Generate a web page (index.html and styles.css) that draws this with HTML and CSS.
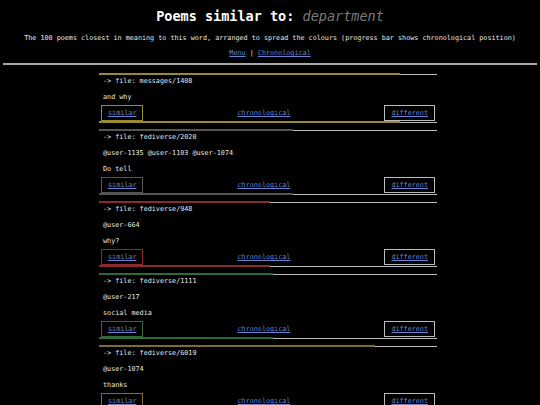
FILE: index.html
```html
<!DOCTYPE html>
<html>
<head>
<meta charset="utf-8">
<link rel="stylesheet" href="styles.css">
</head>
<body>
<header class="head">
  <h1 class="title">Poems similar to: <em class="word">department</em></h1>
  <p class="sub">The 100 poems closest in meaning to this word, arranged to spread the colours (progress bar shows chronological position)</p>
  <p class="menu"><a href="#">Menu</a> | <a href="#">Chronological</a></p>
</header>
<hr class="rule">
<main class="list">
  <section class="poem c-gold">
    <div class="bar"><div class="fill" style="width:89%"></div><div class="rest"></div></div>
    <p class="line">-&gt; file: messages/1408</p>
    <p class="line">and why</p>
    <nav class="nav"><a class="box sim" href="#">similar</a><a href="#">chronological</a><a class="box diff" href="#">different</a></nav>
    <div class="bar"><div class="fill" style="width:89%"></div><div class="rest"></div></div>
  </section>
  <section class="poem c-gray">
    <div class="bar"><div class="fill" style="width:57.4%"></div><div class="rest"></div></div>
    <p class="line">-&gt; file: fediverse/2020</p>
    <p class="line">@user-1135 @user-1103 @user-1074</p>
    <p class="line">Do tell</p>
    <nav class="nav"><a class="box sim" href="#">similar</a><a href="#">chronological</a><a class="box diff" href="#">different</a></nav>
    <div class="bar"><div class="fill" style="width:57.4%"></div><div class="rest"></div></div>
  </section>
  <section class="poem c-red">
    <div class="bar"><div class="fill" style="width:50.6%"></div><div class="rest"></div></div>
    <p class="line">-&gt; file: fediverse/948</p>
    <p class="line">@user-664</p>
    <p class="line">why?</p>
    <nav class="nav"><a class="box sim" href="#">similar</a><a href="#">chronological</a><a class="box diff" href="#">different</a></nav>
    <div class="bar"><div class="fill" style="width:50.6%"></div><div class="rest"></div></div>
  </section>
  <section class="poem c-green">
    <div class="bar"><div class="fill" style="width:51.5%"></div><div class="rest"></div></div>
    <p class="line">-&gt; file: fediverse/1111</p>
    <p class="line">@user-217</p>
    <p class="line">social media</p>
    <nav class="nav"><a class="box sim" href="#">similar</a><a href="#">chronological</a><a class="box diff" href="#">different</a></nav>
    <div class="bar"><div class="fill" style="width:51.5%"></div><div class="rest"></div></div>
  </section>
  <section class="poem c-olive">
    <div class="bar"><div class="fill" style="width:81.7%"></div><div class="rest"></div></div>
    <p class="line">-&gt; file: fediverse/6019</p>
    <p class="line">@user-1074</p>
    <p class="line">thanks</p>
    <nav class="nav"><a class="box sim" href="#">similar</a><a href="#">chronological</a><a class="box diff" href="#">different</a></nav>
    <div class="bar"><div class="fill" style="width:81.7%"></div><div class="rest"></div></div>
  </section>
</main>
</body>
</html>
```
FILE: styles.css
```css
html, body {
  background: #000;
}
body {
  margin: 0;
  padding: 0 3px;
  color: #e8e8e8;
  font-family: "DejaVu Sans Mono", monospace;
  font-size: 6.75px;
}
a {
  color: #6784cc;
  text-decoration: underline;
}
.head {
  text-align: center;
}
.title {
  margin: 8px 0 0;
  font-size: 13.5px;
  line-height: 16px;
  font-weight: bold;
  color: #fff;
}
.word {
  color: #7a7a7a;
  font-weight: normal;
  font-style: italic;
}
.sub {
  margin: 10px 0 0;
  line-height: 8px;
}
.menu {
  margin: 7px 0 0;
  line-height: 8px;
}
.rule {
  margin: 6px 0 0;
  border: 0;
  height: 2px;
  background: #a8a8a8;
}
.list {
  display: flex;
  flex-direction: column;
  width: 338px;
  margin: 8px 0 0 96px;
}
.poem {
  margin-bottom: 6px;
  --c: #9b8a2c;
}
.c-gold { --c: #9b8a2c; }
.c-gray { --c: #555; }
.c-red { --c: #8a2a2a; }
.c-green { --c: #2f6a38; }
.c-olive { --c: #7d6c30; }
.bar {
  display: flex;
  align-items: center;
  height: 2px;
}
.fill {
  height: 2px;
  background: var(--c);
}
.rest {
  flex: 1;
  height: 1px;
  background: #bbb;
}
.line {
  margin: 0;
  padding-left: 4px;
  line-height: 8px;
  margin-top: 8px;
}
.bar + .line {
  margin-top: 2px;
}
.nav {
  display: flex;
  justify-content: space-between;
  align-items: center;
  margin: 4px 2px 0;
  height: 16px;
}
.box {
  box-sizing: border-box;
  height: 16px;
  line-height: 14px;
  padding: 0 6px;
  border: 1px solid #bbb;
}
.sim {
  border-color: var(--c);
}
```
